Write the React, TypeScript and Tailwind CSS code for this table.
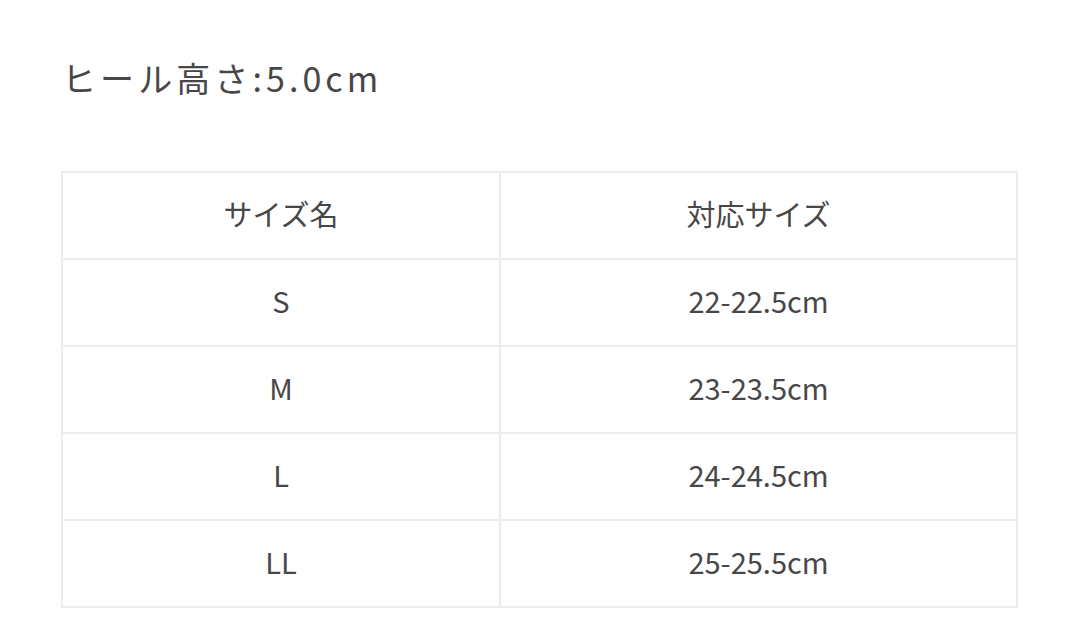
import React from 'react';

const rows = [
  { name: 'S', size: '22-22.5cm' },
  { name: 'M', size: '23-23.5cm' },
  { name: 'L', size: '24-24.5cm' },
  { name: 'LL', size: '25-25.5cm' },
];

const font = { fontFamily: '"Noto Sans CJK JP", "Noto Sans", sans-serif' };

const App: React.FC = () => {
  return (
    <div className="w-[1078px] h-[638px] bg-white text-[#474747]" style={font}>
      <div className="pl-[61px] pr-[60px] pt-[54px]">
        <h2 className="ml-[1px] text-[34px] leading-[48px] tracking-[0.12em] font-normal">
          ヒール高さ:5.0cm
        </h2>

        <table className="mt-[69px] w-[957px] border-collapse border-2 border-[#ececec] text-[29px]">
          <tbody>
            <tr className="h-[87px]">
              <td className="w-[438px] border-2 border-[#ececec] text-center pb-[4px]">サイズ名</td>
              <td className="border-2 border-[#ececec] text-center pb-[4px]">対応サイズ</td>
            </tr>
            {rows.map((r) => (
              <tr key={r.name} className="h-[87px]">
                <td className="border-2 border-[#ececec] text-center pb-[4px]">{r.name}</td>
                <td className="border-2 border-[#ececec] text-center pb-[4px]">{r.size}</td>
              </tr>
            ))}
          </tbody>
        </table>
      </div>
    </div>
  );
};

export default App;
